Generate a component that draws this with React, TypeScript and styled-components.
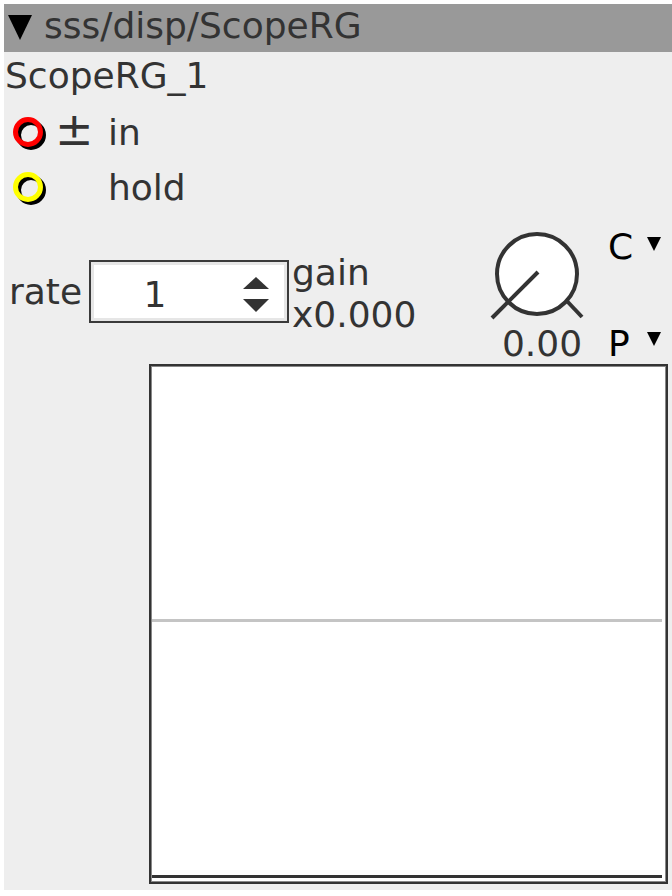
import React from 'react';
import styled, { createGlobalStyle } from 'styled-components';

const GlobalStyle = createGlobalStyle`
  html, body {
    margin: 0;
    padding: 0;
    background: #ffffff;
    overflow: hidden;
  }
  body {
    font-family: 'DejaVu Sans', 'Noto Sans', sans-serif;
  }
`;

const Panel = styled.div`
  margin: 4px 0 0 4px;
  width: 668px;
  height: 886px;
  background: #eeeeee;
  color: #333333;
  font-size: 36px;
  display: flex;
  flex-direction: column;
  overflow: hidden;
`;

const Header = styled.div`
  height: 48px;
  box-sizing: border-box;
  background: #999999;
  display: flex;
  align-items: center;
  gap: 12px;
  padding: 0 0 4px 4px;
  line-height: 1;
`;

const HeaderArrow = styled.svg`
  align-self: flex-start;
  margin-top: 11px;
  flex: none;
`;

const Title = styled.div`
  height: 53px;
  line-height: 47px;
  padding-left: 1px;
`;

const PortRow = styled.div`
  height: 55px;
  display: flex;
  align-items: center;
  padding-left: 8px;
`;

const PortIcon = styled.svg`
  width: 36px;
  height: 34px;
  flex: none;
`;

const PortSign = styled.span`
  width: 60px;
  padding-left: 7px;
  box-sizing: border-box;
  flex: none;
  font-size: 46px;
  line-height: 55px;
  margin-top: -6px;
`;

const Controls = styled.div`
  display: flex;
  align-items: flex-start;
  margin-top: 10px;
  height: 139px;
  flex: none;
`;

const RateGroup = styled.div`
  width: 420px;
  display: flex;
  align-items: flex-start;
  padding-left: 5px;
  box-sizing: border-box;
`;

const Label = styled.span`
  width: 80px;
  margin-top: 35px;
  line-height: 63px;
`;

const SpinBox = styled.div`
  width: 200px;
  height: 63px;
  margin-top: 35px;
  box-sizing: border-box;
  border: 2px solid #3a3a3a;
  background: #ffffff;
  box-shadow: inset 0 0 0 3px #e6e6e6;
  display: flex;
  align-items: flex-start;
`;

const SpinValue = styled.span`
  width: 128px;
  text-align: center;
  line-height: 42px;
  margin-top: 12px;
`;

const SpinArrows = styled.svg`
  margin: 15px 0 0 24px;
`;

const GainStack = styled.div`
  display: flex;
  flex-direction: column;
  line-height: 42px;
  margin: 27px 0 0 3px;
`;

const KnobCol = styled.div`
  display: flex;
  flex-direction: column;
  align-items: center;
  margin: 5px 0 0 63px;
  width: 100px;
  flex: none;
`;

const KnobValue = styled.div`
  line-height: 1;
  margin-left: 10px;
`;

const MenuCol = styled.div`
  display: flex;
  flex-direction: column;
  gap: 61px;
  margin: 4px 0 0 21px;
  color: #000000;
`;

const MenuItem = styled.div`
  display: flex;
  align-items: flex-start;
  line-height: 1;
`;

const MenuLabel = styled.span`
  width: 39px;
`;

const Caret = styled.svg<{ $top: number }>`
  width: 14px;
  height: 14px;
  margin-top: ${p => p.$top}px;
`;

const Scope = styled.div`
  margin-left: 145px;
  width: 519px;
  height: 520px;
  flex: none;
  box-sizing: border-box;
  border: 2px solid #333333;
  box-shadow: inset 0 0 0 1px #888888;
  background: #ffffff;
  display: flex;
  flex-direction: column;
  justify-content: space-between;
  padding: 0 4px 4px 1px;
`;

const ScopeLine = styled.div<{ $color: string; $offset: number }>`
  height: 3px;
  background: ${p => p.$color};
  margin-top: ${p => p.$offset}px;
`;

function Port({ color }: { color: string }) {
  return (
    <PortIcon viewBox="0 0 36 34">
      <circle cx="19" cy="19" r="12.5" fill="none" stroke="#000" strokeWidth="5" />
      <circle cx="16" cy="16" r="12.5" fill="none" stroke={color} strokeWidth="5" />
    </PortIcon>
  );
}

function Knob() {
  return (
    <svg width="100" height="96" viewBox="0 0 100 96">
      <circle cx="50" cy="44" r="40" fill="#ffffff" stroke="#333" strokeWidth="4" />
      <line x1="51" y1="42" x2="5" y2="88" stroke="#333" strokeWidth="4" />
      <line x1="79" y1="70" x2="95" y2="87" stroke="#333" strokeWidth="4" />
    </svg>
  );
}

function Down({ top }: { top: number }) {
  return (
    <Caret $top={top} viewBox="0 0 14 14">
      <polygon points="0,0 14,0 7,14" fill="#000" />
    </Caret>
  );
}

export default function App() {
  return (
    <>
      <GlobalStyle />
      <Panel>
        <Header>
          <HeaderArrow width="24" height="25" viewBox="0 0 24 25">
            <polygon points="0,0 24,0 12,25" fill="#000" />
          </HeaderArrow>
          <span>sss/disp/ScopeRG</span>
        </Header>
        <Title>ScopeRG_1</Title>
        <PortRow>
          <Port color="#ff0000" />
          <PortSign>±</PortSign>
          <span>in</span>
        </PortRow>
        <PortRow>
          <Port color="#ffff00" />
          <PortSign />
          <span>hold</span>
        </PortRow>
        <Controls>
          <RateGroup>
            <Label>rate</Label>
            <SpinBox>
              <SpinValue>1</SpinValue>
              <SpinArrows width="26" height="35" viewBox="0 0 26 35">
                <polygon points="13,0 26,12 0,12" fill="#333" />
                <polygon points="0,22 26,22 13,35" fill="#333" />
              </SpinArrows>
            </SpinBox>
            <GainStack>
              <span>gain</span>
              <span>x0.000</span>
            </GainStack>
          </RateGroup>
          <KnobCol>
            <Knob />
            <KnobValue>0.00</KnobValue>
          </KnobCol>
          <MenuCol>
            <MenuItem>
              <MenuLabel>C</MenuLabel>
              <Down top={8} />
            </MenuItem>
            <MenuItem>
              <MenuLabel>P</MenuLabel>
              <Down top={6} />
            </MenuItem>
          </MenuCol>
        </Controls>
        <Scope>
          <ScopeLine $color="#c4c4c4" $offset={253} />
          <ScopeLine $color="#333333" $offset={0} />
        </Scope>
      </Panel>
    </>
  );
}
